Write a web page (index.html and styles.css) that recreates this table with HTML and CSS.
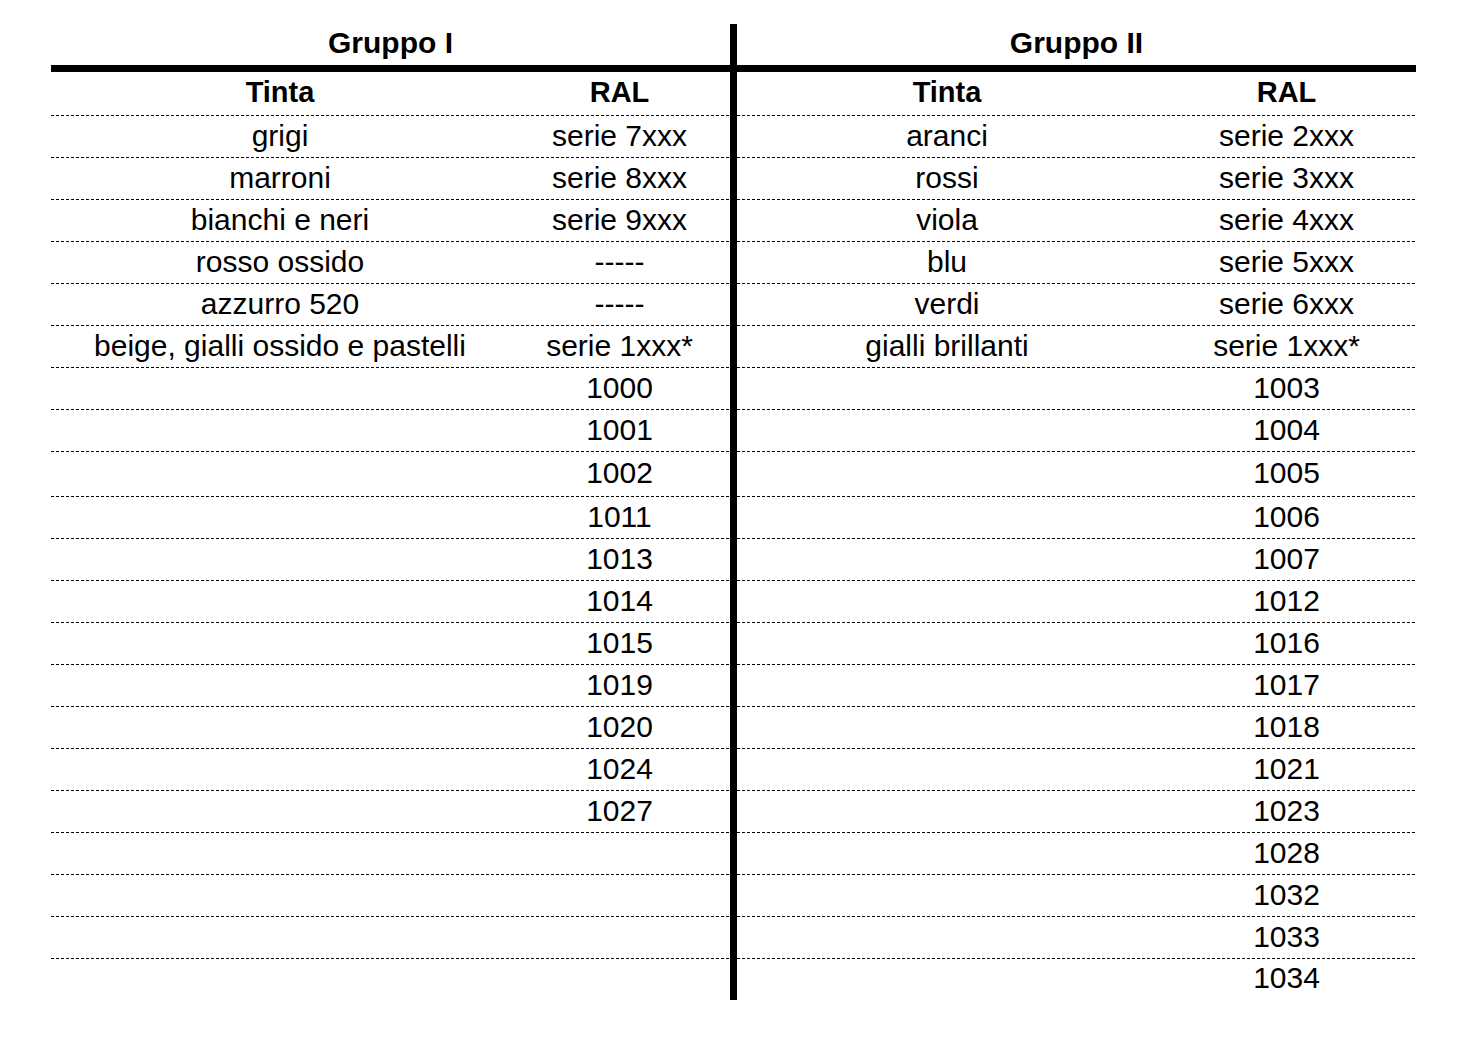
FILE: index.html
```html
<!DOCTYPE html>
<html lang="it">
<head>
<meta charset="utf-8">
<title>Gruppi RAL</title>
<link rel="stylesheet" href="styles.css">
</head>
<body>
<div class="sheet">
  <div class="table">
    <div class="group group-left">
      <div class="group-title">Gruppo I</div>
      <div class="rule"></div>
      <div class="row head"><div>Tinta</div><div>RAL</div></div>
      <div class="row"><div>grigi</div><div>serie 7xxx</div></div>
      <div class="row"><div>marroni</div><div>serie 8xxx</div></div>
      <div class="row"><div>bianchi e neri</div><div>serie 9xxx</div></div>
      <div class="row"><div>rosso ossido</div><div>-----</div></div>
      <div class="row"><div>azzurro 520</div><div>-----</div></div>
      <div class="row"><div>beige, gialli ossido e pastelli</div><div>serie 1xxx*</div></div>
      <div class="row"><div></div><div>1000</div></div>
      <div class="row"><div></div><div>1001</div></div>
      <div class="row tall"><div></div><div>1002</div></div>
      <div class="row"><div></div><div>1011</div></div>
      <div class="row"><div></div><div>1013</div></div>
      <div class="row"><div></div><div>1014</div></div>
      <div class="row"><div></div><div>1015</div></div>
      <div class="row"><div></div><div>1019</div></div>
      <div class="row"><div></div><div>1020</div></div>
      <div class="row"><div></div><div>1024</div></div>
      <div class="row"><div></div><div>1027</div></div>
      <div class="row"><div></div><div></div></div>
      <div class="row"><div></div><div></div></div>
      <div class="row"><div></div><div></div></div>
      <div class="row last"><div></div><div></div></div>
    </div>
    <div class="divider"></div>
    <div class="group group-right">
      <div class="group-title">Gruppo II</div>
      <div class="rule"></div>
      <div class="row head"><div>Tinta</div><div>RAL</div></div>
      <div class="row"><div>aranci</div><div>serie 2xxx</div></div>
      <div class="row"><div>rossi</div><div>serie 3xxx</div></div>
      <div class="row"><div>viola</div><div>serie 4xxx</div></div>
      <div class="row"><div>blu</div><div>serie 5xxx</div></div>
      <div class="row"><div>verdi</div><div>serie 6xxx</div></div>
      <div class="row"><div>gialli brillanti</div><div>serie 1xxx*</div></div>
      <div class="row"><div></div><div>1003</div></div>
      <div class="row"><div></div><div>1004</div></div>
      <div class="row tall"><div></div><div>1005</div></div>
      <div class="row"><div></div><div>1006</div></div>
      <div class="row"><div></div><div>1007</div></div>
      <div class="row"><div></div><div>1012</div></div>
      <div class="row"><div></div><div>1016</div></div>
      <div class="row"><div></div><div>1017</div></div>
      <div class="row"><div></div><div>1018</div></div>
      <div class="row"><div></div><div>1021</div></div>
      <div class="row"><div></div><div>1023</div></div>
      <div class="row"><div></div><div>1028</div></div>
      <div class="row"><div></div><div>1032</div></div>
      <div class="row"><div></div><div>1033</div></div>
      <div class="row last"><div></div><div>1034</div></div>
    </div>
  </div>
</div>
</body>
</html>
```

FILE: styles.css
```css
html, body {
  margin: 0;
  padding: 0;
  background: #fff;
}

body {
  font-family: "Liberation Sans", Arial, sans-serif;
  color: #000;
}

.sheet {
  padding: 24px 0 0 51px;
}

.table {
  display: grid;
  grid-template-columns: 679px 7px 679px;
}

.divider {
  background: #000;
  height: 976px;
}

.group-title {
  height: 41px;
  display: flex;
  align-items: center;
  justify-content: center;
  font-weight: bold;
  font-size: 30px;
  padding-bottom: 4px;
  box-sizing: border-box;
}

.rule {
  height: 7px;
  background: #000;
}

.row {
  display: grid;
  height: 42px;
  font-size: 30px;
  background-image: repeating-linear-gradient(to right, #000 0 3px, transparent 3px 5px);
  background-size: 100% 1px;
  background-position: left bottom;
  background-repeat: no-repeat;
  box-sizing: border-box;
  padding-bottom: 3px;
}

.group-left .row {
  grid-template-columns: 458px 221px;
}

.group-right .row {
  grid-template-columns: 420px 259px;
}

.row > div {
  display: flex;
  align-items: center;
  justify-content: center;
  white-space: nowrap;
}

.row.head {
  height: 44px;
  font-weight: bold;
  font-size: 29px;
}

.row.tall {
  height: 45px;
}

.row.last {
  background-image: none;
  height: 41px;
}
```
